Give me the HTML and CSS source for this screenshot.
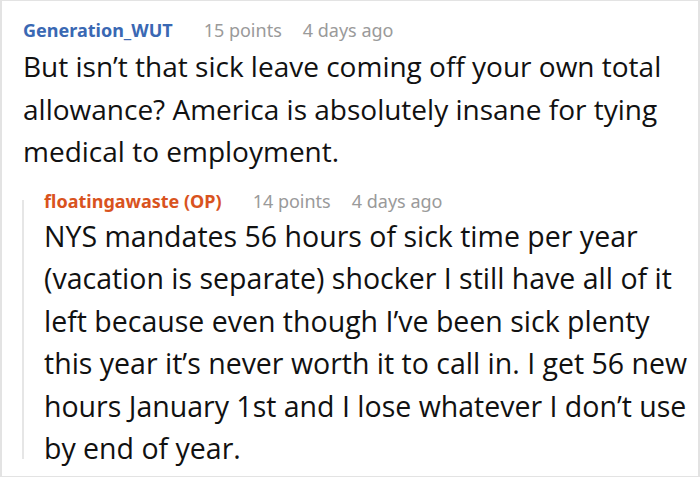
FILE: index.html
```html
<!DOCTYPE html>
<html>
<head>
<meta charset="utf-8">
<link rel="stylesheet" href="styles.css">
</head>
<body>
<div class="frame">
  <div class="comment">
    <div class="meta">
      <span class="author author-blue">Generation_WUT</span>
      <span class="points">15 points</span>
      <span class="time">4 days ago</span>
    </div>
    <p class="text text-first">But isn’t that sick leave coming off your own total allowance? America is absolutely insane for tying medical to employment.</p>
  </div>
  <div class="reply">
    <div class="meta">
      <span class="author author-op">floatingawaste (OP)</span>
      <span class="points">14 points</span>
      <span class="time">4 days ago</span>
    </div>
    <p class="text text-reply">NYS mandates 56 hours of sick time per year (vacation is separate) shocker I still have all of it left because even though I’ve been sick plenty this year it’s never worth it to call in. I get 56 new hours January 1st and I lose whatever I don’t use by end of year.</p>
  </div>
</div>
</body>
</html>
```

FILE: styles.css
```css
html, body {
  margin: 0;
  padding: 0;
  background: #ffffff;
}

.frame {
  box-sizing: border-box;
  width: 700px;
  height: 477px;
  border: 1px solid #e3e3e3;
  border-left-width: 2px;
  border-right-width: 2px;
  padding: 17px 20px 0 20px;
  font-family: "Noto Sans", "Open Sans", sans-serif;
  color: #111111;
  overflow: hidden;
}

.meta {
  display: flex;
  align-items: center;
  height: 24px;
  font-size: 18px;
  line-height: 24px;
  white-space: nowrap;
}

.author {
  font-weight: 700;
  margin-right: 31px;
}

.author-blue {
  color: #3a68b3;
}

.author-op {
  color: #d9531e;
}

.points {
  color: #9a9a9a;
  margin-right: 21px;
}

.time {
  color: #9a9a9a;
}

.text {
  margin: 0;
  line-height: 42.5px;
}

.text-first {
  font-family: "Open Sans", "Noto Sans", sans-serif;
  font-size: 28px;
  margin-top: 3px;
  width: 665px;
}

.text-reply {
  font-family: "Open Sans", "Noto Sans", sans-serif;
  font-size: 28.5px;
  margin-top: 1.5px;
  width: 652px;
}

.comment {
  margin-left: 1px;
}

.reply {
  position: relative;
  margin-top: 16.5px;
  padding-left: 22px;
}

.reply::before {
  content: "";
  position: absolute;
  left: 0;
  top: 11px;
  height: 259px;
  width: 2px;
  background: #e6e6e6;
}
```
